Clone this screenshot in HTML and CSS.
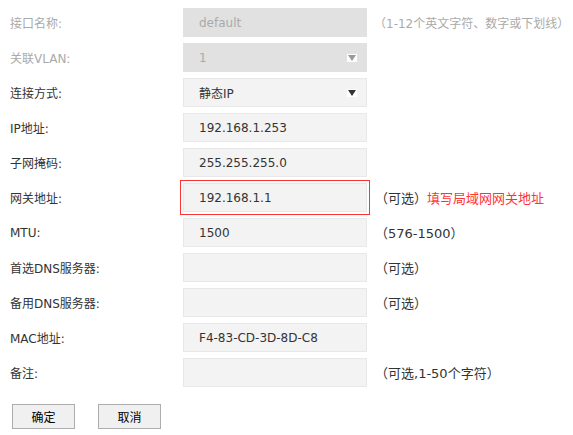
FILE: index.html
```html
<!DOCTYPE html>
<html lang="zh-CN">
<head>
  <meta charset="UTF-8">
  <title>接口设置</title>
  <link rel="stylesheet" href="styles.css">
</head>
<body>
  <form class="config">
    <div class="row disabled">
      <label class="label">接口名称:</label>
      <div class="field"><span class="value">default</span></div>
      <span class="hint">（1-12个英文字符、数字或下划线）</span>
    </div>
    <div class="row disabled">
      <label class="label">关联VLAN:</label>
      <div class="field select">
        <span class="value">1</span>
        <svg class="arrow" width="10" height="8" viewBox="0 0 10 8"><rect width="10" height="8" fill="#fff"/><polygon points="1,1 9,1 5,7" fill="#999"/></svg>
      </div>
    </div>
    <div class="row">
      <label class="label">连接方式:</label>
      <div class="field select">
        <span class="value">静态IP</span>
        <svg class="arrow" width="10" height="8" viewBox="0 0 10 8"><rect width="10" height="8" fill="#fff"/><polygon points="1,1 9,1 5,7" fill="#333"/></svg>
      </div>
    </div>
    <div class="row">
      <label class="label">IP地址:</label>
      <div class="field"><span class="value">192.168.1.253</span></div>
    </div>
    <div class="row">
      <label class="label">子网掩码:</label>
      <div class="field"><span class="value">255.255.255.0</span></div>
    </div>
    <div class="row">
      <label class="label">网关地址:</label>
      <div class="field marked"><span class="value">192.168.1.1</span></div>
      <span class="hint">（可选）<span class="note">填写局域网网关地址</span></span>
    </div>
    <div class="row">
      <label class="label">MTU:</label>
      <div class="field"><span class="value">1500</span></div>
      <span class="hint">（576-1500）</span>
    </div>
    <div class="row">
      <label class="label">首选DNS服务器:</label>
      <div class="field"></div>
      <span class="hint">（可选）</span>
    </div>
    <div class="row">
      <label class="label">备用DNS服务器:</label>
      <div class="field"></div>
      <span class="hint">（可选）</span>
    </div>
    <div class="row">
      <label class="label">MAC地址:</label>
      <div class="field"><span class="value">F4-83-CD-3D-8D-C8</span></div>
    </div>
    <div class="row">
      <label class="label">备注:</label>
      <div class="field"></div>
      <span class="hint">（可选,1-50个字符）</span>
    </div>
    <div class="actions">
      <button type="button">确定</button>
      <button type="button">取消</button>
    </div>
  </form>
</body>
</html>
```

FILE: styles.css
```css
body {
  margin: 0;
  font-family: "DejaVu Sans", "Noto Sans CJK SC", sans-serif;
  font-size: 12px;
  color: #333;
  background: #fff;
}
.config {
  display: flex;
  flex-direction: column;
  gap: 6px;
  padding: 8px 0 0 10px;
}
.row {
  display: flex;
  align-items: center;
  height: 29px;
}
.label {
  width: 173px;
  flex-shrink: 0;
}
.field {
  box-sizing: border-box;
  width: 184px;
  height: 29px;
  flex-shrink: 0;
  display: flex;
  align-items: center;
  justify-content: space-between;
  padding: 0 9px 0 15px;
  background-color: #f3f3f3;
  border: 1px solid #e8e8e8;
}
.field.marked {
  outline: 1px solid #f33;
  outline-offset: 2px;
}
.hint {
  margin-left: 8px;
  font-size: 13px;
  white-space: nowrap;
}
.note {
  color: #f33;
}
.disabled .label,
.disabled .value,
.disabled .hint {
  color: #aaa;
}
.disabled .hint {
  margin-left: 7px;
  font-size: 12px;
}
.disabled .field {
  background-color: #e1e1e1;
  border-color: #e1e1e1;
}
.arrow {
  display: block;
}
.actions {
  display: flex;
  gap: 23px;
  margin: 11px 0 0 2px;
}
.actions button {
  box-sizing: border-box;
  width: 63px;
  height: 25px;
  padding: 0;
  font-family: "Noto Sans CJK SC", sans-serif;
  font-size: 12px;
  color: #000;
  background-color: #f0f0f0;
  border: 1px solid #adadad;
  border-radius: 0;
}
```
